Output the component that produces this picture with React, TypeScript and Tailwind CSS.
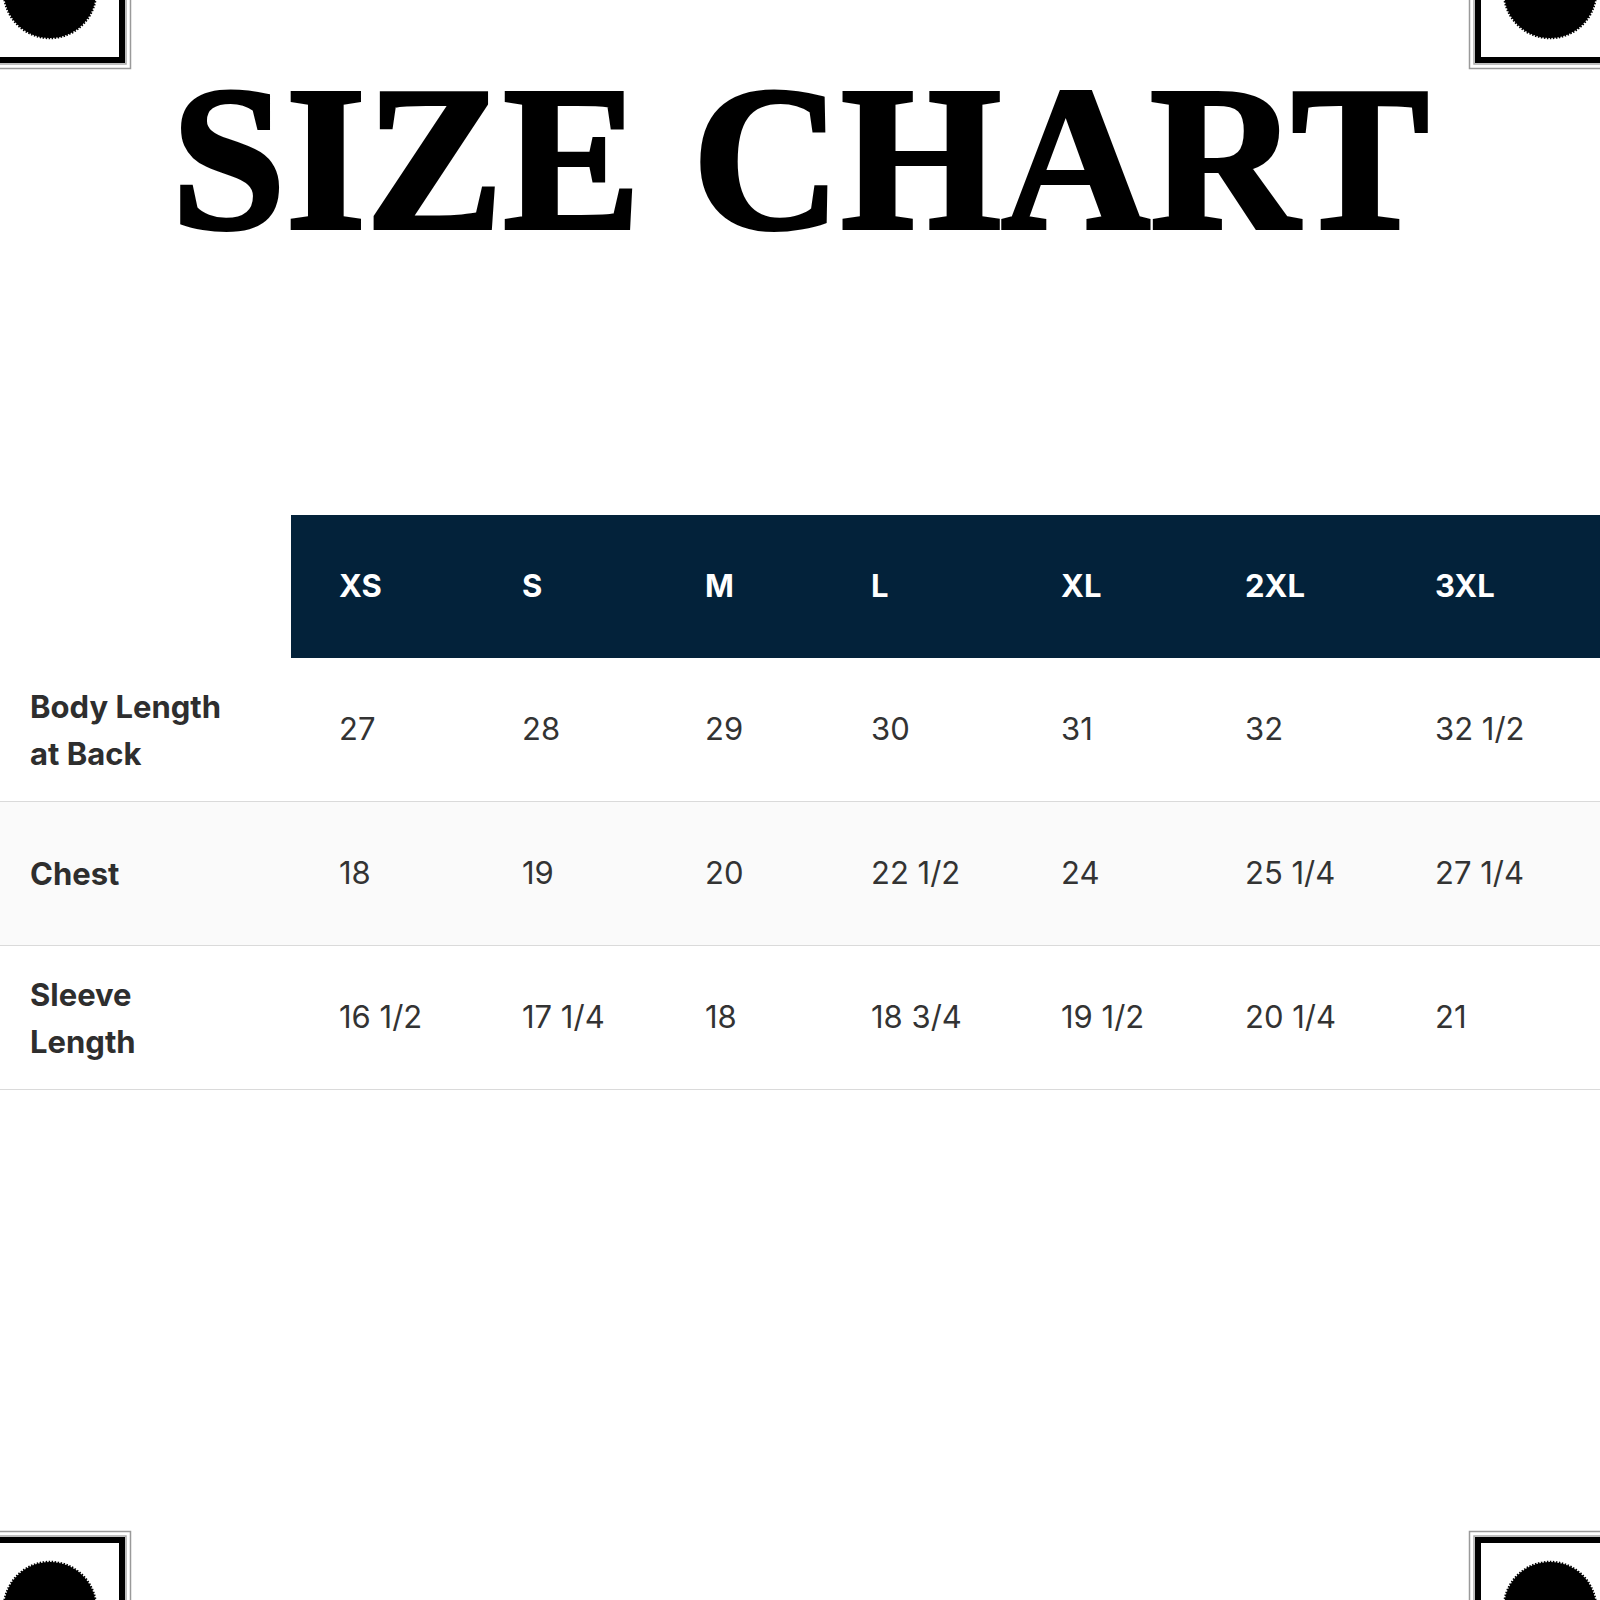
import React from 'react';

const sizes = ["XS", "S", "M", "L", "XL", "2XL", "3XL"];

const rows = [
  { label: ["Body Length", "at Back"], values: ["27", "28", "29", "30", "31", "32", "32 1/2"], shaded: false },
  { label: ["Chest"], values: ["18", "19", "20", "22 1/2", "24", "25 1/4", "27 1/4"], shaded: true },
  { label: ["Sleeve", "Length"], values: ["16 1/2", "17 1/4", "18", "18 3/4", "19 1/2", "20 1/4", "21"], shaded: false },
];

// corner ornament: a black scalloped disc cut by the page edge, inside a double frame line
const Corner = ({ className }: { className: string }) => (
  <svg width="140" height="75" viewBox="0 0 140 75" className={className}>
    <circle cx="50" cy="-8" r="46" fill="#000" stroke="#000" strokeWidth="2.5" strokeDasharray="1.5 1.5" />
    <path d="M0 68.5 H130.5 V0" fill="none" stroke="#9a9a9a" strokeWidth="1.5" />
    <path d="M0 60 H122 V0" fill="none" stroke="#000" strokeWidth="6" />
    <path d="M0 64 H126 V0" fill="none" stroke="#555" strokeWidth="1.5" opacity="0.5" />
  </svg>
);

const App = () => {
  return (
    <div className="relative w-[1600px] h-[1600px] bg-white overflow-hidden font-['Inter',sans-serif]">
      <Corner className="absolute top-0 left-0" />
      <Corner className="absolute top-0 right-0 -scale-x-100" />
      <Corner className="absolute bottom-0 left-0 -scale-y-100" />
      <Corner className="absolute bottom-0 right-0 -scale-x-100 -scale-y-100" />

      <div className="flex flex-col">
        <h1 className="mt-[56px] h-[206px] text-center text-[206px] leading-none font-bold text-black font-['Times_New_Roman','Liberation_Serif',serif] tracking-[0px] [-webkit-text-stroke:4px_#000]">
          SIZE CHART
        </h1>

        <div className="mt-[253px] grid grid-cols-[291px_183px_183px_166px_190px_184px_190px_1fr]">
          <div className="h-[143px]" />
          {sizes.map((s) => (
            <div key={s} className="h-[143px] bg-[#03223a] flex items-center pl-[48px] text-white text-[31px] font-bold">
              {s}
            </div>
          ))}
        </div>

        {rows.map((row) => (
          <div
            key={row.label.join(" ")}
            className={`grid grid-cols-[291px_183px_183px_166px_190px_184px_190px_1fr] h-[144px] border-b border-[#dadada] ${row.shaded ? "bg-[#fafafa]" : "bg-white"}`}
          >
            <div className="flex flex-col justify-center pl-[30px] text-[31px] leading-[47px] font-bold text-[#2e2e2e]">
              {row.label.map((l) => (
                <span key={l}>{l}</span>
              ))}
            </div>
            {row.values.map((v, i) => (
              <div key={i} className="flex items-center pl-[48px] text-[31px] text-[#333]">
                {v}
              </div>
            ))}
          </div>
        ))}
      </div>
    </div>
  );
};

export default App;
